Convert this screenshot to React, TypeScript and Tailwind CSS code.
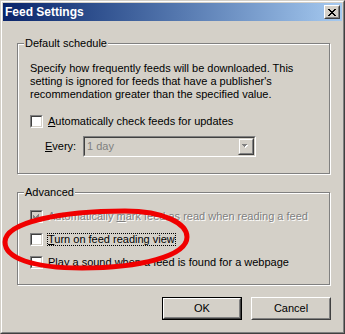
import React from "react";

const font = { fontFamily: '"Liberation Sans", Arial, sans-serif' };

function Checkbox({ checked = false, disabled = false }: { checked?: boolean; disabled?: boolean }) {
  return (
    <span className="block w-[13px] h-[13px] shrink-0 border border-t-[#808080] border-l-[#808080] border-r-white border-b-white">
      <span
        className={`relative block w-full h-full border border-t-[#404040] border-l-[#404040] border-r-[#d4d0c8] border-b-[#d4d0c8] ${
          disabled ? "bg-[#d4d0c8]" : "bg-white"
        }`}
      >
        {checked && (
          <svg width="9" height="9" viewBox="0 0 9 9" className="block" shapeRendering="crispEdges">
            <path d="M1 3h1v1h1v1h1v-1h1v-1h1v-1h1v3h-1v1h-1v1h-1v1h-1v-1h-1v-1h-1z" fill={disabled ? "#808080" : "#000"} />
          </svg>
        )}
      </span>
    </span>
  );
}

function Group({ label, className, children }: { label: string; className: string; children: React.ReactNode }) {
  return (
    <div className={`flex flex-col w-[313px] border border-[#808080] shadow-[inset_1px_1px_0_#fff,1px_1px_0_#fff] ${className}`}>
      <span className="self-start -mt-[7px] ml-[6px] px-[1px] h-[13px] leading-[13px] bg-[#d4d0c8]">{label}</span>
      {children}
    </div>
  );
}

function Button({ children, isDefault = false }: { children: React.ReactNode; isDefault?: boolean }) {
  const inner = (
    <div className="flex h-full w-full border border-t-white border-l-white border-r-[#404040] border-b-[#404040]">
      <div className="flex h-full w-full items-center justify-center border border-t-[#d4d0c8] border-l-[#d4d0c8] border-r-[#808080] border-b-[#808080] leading-[13px]">
        {children}
      </div>
    </div>
  );
  return (
    <div className={`w-[80px] h-[23px] ${isDefault ? "border border-black" : ""}`}>{inner}</div>
  );
}

export default function App() {
  return (
    <div className="relative w-[345px] h-[334px] overflow-hidden text-[11px] text-black" style={font}>
      <div className="flex flex-col w-full h-full bg-[#d4d0c8] border border-t-[#d4d0c8] border-l-[#d4d0c8] border-r-[#404040] border-b-[#404040]">
        <div className="flex flex-col flex-1 border border-t-white border-l-white border-r-[#808080] border-b-[#808080] p-[1px]">
          {/* Title bar */}
          <div className="flex items-center h-[18px] bg-gradient-to-r from-[#0a246a] to-[#a6caf0] pl-[2px] pr-[2px]">
            <span className="flex-1 text-white font-bold text-[12px] leading-[14px]">Feed Settings</span>
            <div className="w-[16px] h-[14px] border border-t-white border-l-white border-r-[#404040] border-b-[#404040] bg-[#d4d0c8]">
              <div className="flex items-center justify-center w-full h-full border border-t-[#d4d0c8] border-l-[#d4d0c8] border-r-[#808080] border-b-[#808080]">
                <svg width="8" height="7" viewBox="0 0 8 7" shapeRendering="crispEdges">
                  <path d="M0 0h2v1h1v1h2v-1h1v-1h2v1h-1v1h-1v1h-1v1h1v1h1v1h1v1h-2v-1h-1v-1h-2v1h-1v1h-2v-1h1v-1h1v-1h1v-1h-1v-1h-1v-1h-1z" fill="#000" />
                </svg>
              </div>
            </div>
          </div>

          {/* Body */}
          <div className="flex flex-col pl-[14px] pt-[22px]">
            <Group label="Default schedule" className="h-[131px]">
              <p className="mt-[12px] pl-[12px] leading-[13px]">
                Specify how frequently feeds will be downloaded. This
                <br />
                setting is ignored for feeds that have a publisher's
                <br />
                recommendation greater than the specified value.
              </p>
              <div className="flex items-center mt-[14px] pl-[12px] h-[13px] gap-[4px]">
                <Checkbox />
                <span className="border border-transparent leading-[11px]">
                  <u>A</u>utomatically check feeds for updates
                </span>
              </div>
              <div className="flex items-center mt-[8px] pl-[27px] h-[21px]">
                <span className="w-[38px]">
                  <u>E</u>very:
                </span>
                <div className="w-[173px] h-[21px] border border-t-[#808080] border-l-[#808080] border-r-white border-b-white">
                  <div className="flex items-center h-full border border-t-[#404040] border-l-[#404040] border-r-[#d4d0c8] border-b-[#d4d0c8] bg-[#d4d0c8]">
                    <span className="flex-1 pl-[2px] text-[#808080]">1 day</span>
                    <div className="w-[16px] h-[17px] border border-t-[#d4d0c8] border-l-[#d4d0c8] border-r-[#404040] border-b-[#404040]">
                      <div className="flex items-center justify-center w-full h-full border border-t-white border-l-white border-r-[#808080] border-b-[#808080]">
                        <svg width="8" height="5" viewBox="0 0 8 5" shapeRendering="crispEdges">
                          <path d="M1 1h5v1h-1v1h-1v1h-1v-1h-1v-1h-1z" fill="#fff" />
                          <path d="M0 0h5v1h-1v1h-1v1h-1v-1h-1v-1h-1z" fill="#808080" />
                        </svg>
                      </div>
                    </div>
                  </div>
                </div>
              </div>
            </Group>

            <Group label="Advanced" className="h-[93px] mt-[18px]">
              <div className="flex items-center mt-[11px] pl-[12px] h-[13px] gap-[4px]">
                <Checkbox checked disabled />
                <span className="border border-transparent leading-[11px] text-[#808080] [text-shadow:1px_1px_0_#fff]">
                  Automatically <u>m</u>ark feed as read when reading a feed
                </span>
              </div>
              <div className="flex items-center mt-[10px] pl-[12px] h-[13px] gap-[4px]">
                <Checkbox />
                <span className="border border-dotted border-black leading-[11px]">
                  <u>T</u>urn on feed reading view
                </span>
              </div>
              <div className="flex items-center mt-[10px] pl-[12px] h-[13px] gap-[4px]">
                <Checkbox />
                <span className="border border-transparent leading-[11px]">
                  <u>P</u>lay a sound when a feed is found for a webpage
                </span>
              </div>
            </Group>

            <div className="flex mt-[12px] pl-[145px] gap-[9px]">
              <Button isDefault>OK</Button>
              <Button>Cancel</Button>
            </div>
          </div>
        </div>
      </div>

      {/* Red annotation ellipse */}
      <svg className="absolute left-0 top-0 pointer-events-none" width="345" height="334" viewBox="0 0 345 334">
        <path
          d="M5 242 C5 222 62 211 125 211 C165 211 187 224 187 237 C187 256 140 268 82 268 C32 268 5 258 5 242 Z"
          fill="none"
          stroke="#f00000"
          strokeWidth="5"
        />
      </svg>
    </div>
  );
}
